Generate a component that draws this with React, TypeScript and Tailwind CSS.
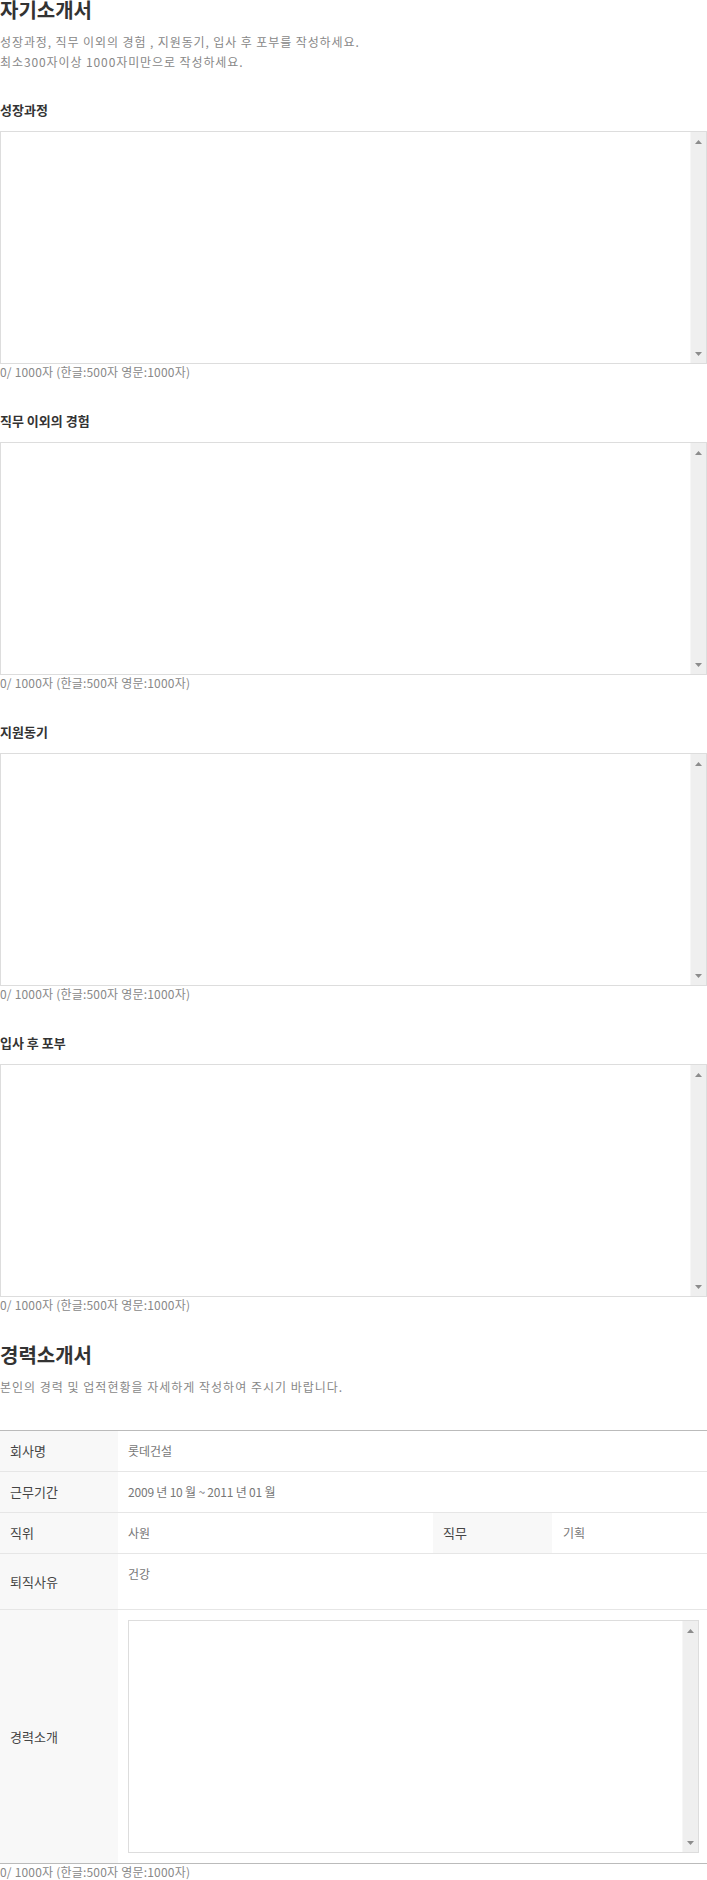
import React from "react";

function Arrow({ up }: { up: boolean }) {
  return (
    <svg width="7" height="4" viewBox="0 0 7 4" className="block">
      {up ? <path d="M3.5 0L7 4H0Z" fill="#8c8c8c" /> : <path d="M0 0H7L3.5 4Z" fill="#8c8c8c" />}
    </svg>
  );
}

function FakeScrollbar() {
  return (
    <div className="w-[16px] shrink-0 bg-[#efefef] border-l border-[#f6f6f6] flex flex-col justify-between items-center pt-[8px] pb-[7px]">
      <Arrow up />
      <Arrow up={false} />
    </div>
  );
}

function TextBox() {
  return (
    <div className="flex h-[233px] border border-[#dddddd] bg-white">
      <textarea className="flex-1 resize-none outline-none bg-white p-2 text-[12px]" />
      <FakeScrollbar />
    </div>
  );
}

function Counter() {
  return (
    <div className="text-[12px] leading-[16px] tracking-[0.2px] text-[#888888] whitespace-nowrap">
      0/ 1000자 (한글:500자 영문:1000자)
    </div>
  );
}

function Section({ label, first }: { label: string; first?: boolean }) {
  return (
    <div className={first ? "mt-[28px]" : "mt-[31px]"}>
      <div className="text-[13px] leading-[20px] font-bold text-[#333333]">{label}</div>
      <div className="mt-[11px]">
        <TextBox />
      </div>
      <Counter />
    </div>
  );
}

export default function App() {
  return (
    <div className="w-[707px] h-[1880px] overflow-hidden bg-white [font-family:'Noto_Sans_CJK_KR','Noto_Sans',sans-serif]">
      <h1 className="text-[20px] leading-[20px] font-bold text-[#333333]">자기소개서</h1>
      <div className="mt-[12px] text-[12px] leading-[20px] tracking-[0.9px] text-[#888888]">
        <p>성장과정, 직무 이외의 경험 , 지원동기, 입사 후 포부를 작성하세요.</p>
        <p>최소300자이상 1000자미만으로 작성하세요.</p>
      </div>

      <Section label="성장과정" first />
      <Section label="직무 이외의 경험" />
      <Section label="지원동기" />
      <Section label="입사 후 포부" />

      <h2 className="mt-[30px] text-[20px] leading-[24px] font-bold text-[#333333]">경력소개서</h2>
      <p className="mt-[10px] text-[12px] leading-[20px] tracking-[1px] text-[#888888]">
        본인의 경력 및 업적현황을 자세하게 작성하여 주시기 바랍니다.
      </p>

      <div className="mt-[33px] border-t border-[#bbbbbb] text-[13px]">
        <div className="flex h-[41px] border-b border-[#e6e6e6]">
          <div className="w-[118px] shrink-0 bg-[#f8f8f8] pl-[10px] flex items-center text-[#444444]">회사명</div>
          <div className="flex-1 pl-[10px] flex items-center text-[12px] text-[#777777]">롯데건설</div>
        </div>
        <div className="flex h-[41px] border-b border-[#e6e6e6]">
          <div className="w-[118px] shrink-0 bg-[#f8f8f8] pl-[10px] flex items-center text-[#444444]">근무기간</div>
          <div className="flex-1 pl-[10px] flex items-center text-[12px] tracking-[-0.2px] text-[#777777]">
            2009 년 10 월 ~ 2011 년 01 월
          </div>
        </div>
        <div className="flex h-[41px] border-b border-[#e6e6e6]">
          <div className="w-[118px] shrink-0 bg-[#f8f8f8] pl-[10px] flex items-center text-[#444444]">직위</div>
          <div className="w-[315px] shrink-0 pl-[10px] flex items-center text-[12px] text-[#777777]">사원</div>
          <div className="w-[119px] shrink-0 bg-[#f8f8f8] pl-[10px] flex items-center text-[#444444]">직무</div>
          <div className="flex-1 pl-[11px] flex items-center text-[12px] text-[#777777]">기획</div>
        </div>
        <div className="flex h-[56px] border-b border-[#e6e6e6]">
          <div className="w-[118px] shrink-0 bg-[#f8f8f8] pl-[10px] flex items-center text-[#444444]">퇴직사유</div>
          <div className="flex-1 pl-[10px] pt-[12px] text-[12px] leading-[16px] text-[#777777]">건강</div>
        </div>
        <div className="flex border-b border-[#bbbbbb]">
          <div className="w-[118px] shrink-0 bg-[#f8f8f8] pl-[10px] flex items-center text-[#444444]">경력소개</div>
          <div className="flex-1 pl-[10px] pr-[8px] pt-[10px] pb-[10px]">
            <TextBox />
          </div>
        </div>
      </div>
      <Counter />
    </div>
  );
}
